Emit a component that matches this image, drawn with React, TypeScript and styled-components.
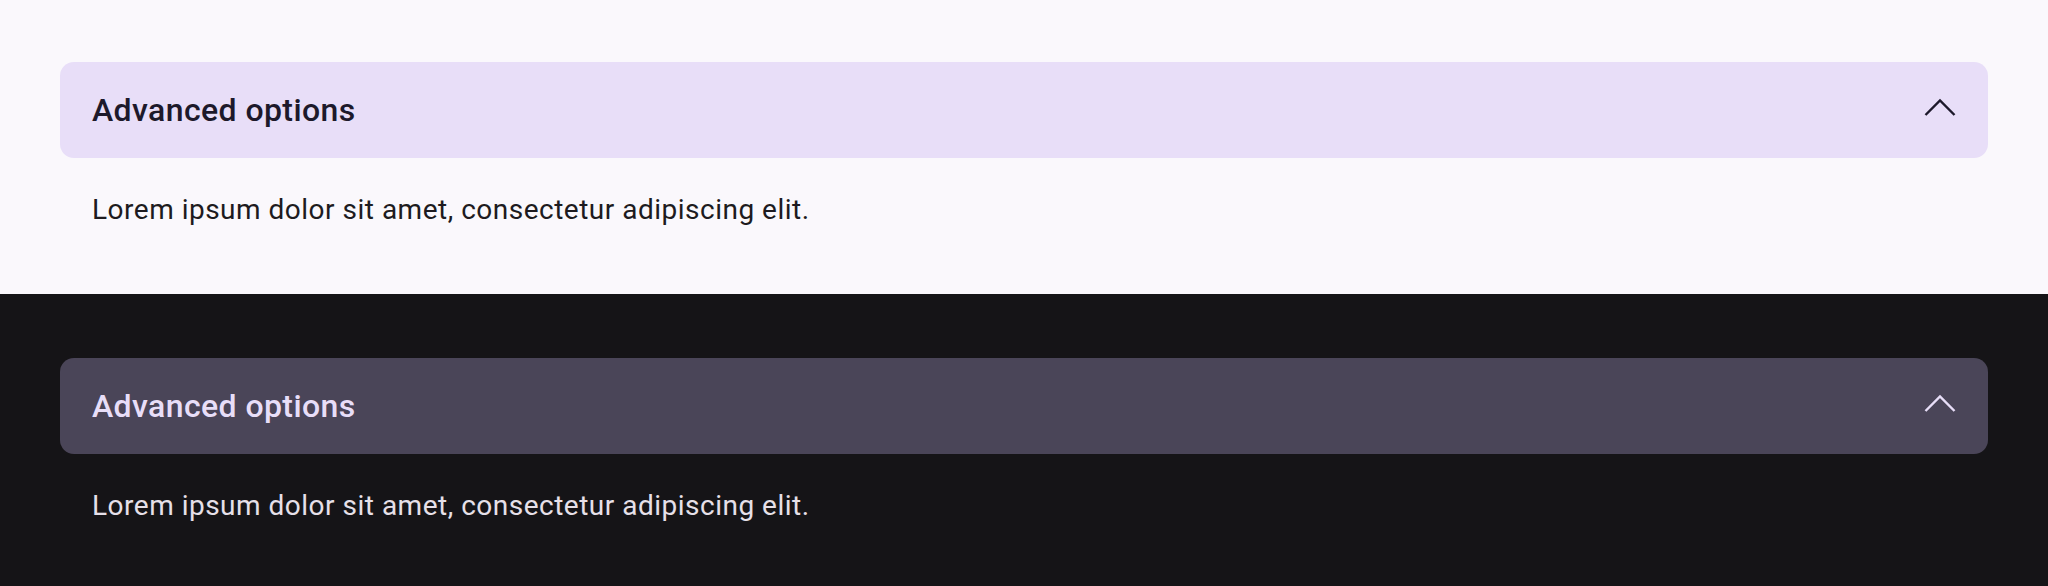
import React from 'react';
import styled, { createGlobalStyle } from 'styled-components';

const GlobalStyle = createGlobalStyle`
  html, body {
    margin: 0;
    padding: 0;
    background: #141316;
  }
  body {
    font-family: Roboto, "Noto Sans", Arial, sans-serif;
  }
`;

type Mode = 'light' | 'dark';

const palette = {
  light: {
    bg: '#faf8fc',
    header: '#e8def8',
    title: '#1d192b',
    text: '#1d1b20',
    icon: '#1d192b',
  },
  dark: {
    bg: '#151417',
    header: '#4a4558',
    title: '#e8def8',
    text: '#e6e0e9',
    icon: '#e8def8',
  },
};

const Panel = styled.section<{ $mode: Mode; $top: number; $height: number }>`
  box-sizing: border-box;
  height: ${(p) => p.$height}px;
  padding: ${(p) => p.$top}px 60px 0;
  background: ${(p) => palette[p.$mode].bg};
`;

const Summary = styled.button<{ $mode: Mode }>`
  box-sizing: border-box;
  display: flex;
  align-items: center;
  justify-content: space-between;
  width: 100%;
  height: 96px;
  padding: 0 32px;
  border: none;
  border-radius: 14px;
  background: ${(p) => palette[p.$mode].header};
  cursor: pointer;
  text-align: left;
`;

const Title = styled.span<{ $mode: Mode }>`
  font-family: Roboto, "Noto Sans", Arial, sans-serif;
  font-size: 32px;
  font-weight: 500;
  line-height: 40px;
  letter-spacing: 0.4px;
  color: ${(p) => palette[p.$mode].title};
`;

const Chevron = styled.svg`
  display: block;
  width: 32px;
  height: 32px;
  margin-top: -4px;
`;

const Details = styled.p<{ $mode: Mode }>`
  margin: 32px 0 0;
  padding: 0 32px;
  font-family: Roboto, "Noto Sans", Arial, sans-serif;
  font-size: 28px;
  line-height: 40px;
  letter-spacing: 0.5px;
  color: ${(p) => palette[p.$mode].text};
`;

type AccordionProps = {
  mode: Mode;
  top: number;
  height: number;
};

const Accordion: React.FC<AccordionProps> = ({ mode, top, height }) => (
  <Panel $mode={mode} $top={top} $height={height}>
    <Summary $mode={mode} aria-expanded>
      <Title $mode={mode}>Advanced options</Title>
      <Chevron viewBox="0 0 32 32" fill="none">
        <polyline
          points="1.5,23 16,8.5 30.5,23"
          stroke={palette[mode].icon}
          strokeWidth="2.4"
          strokeLinecap="butt"
        />
      </Chevron>
    </Summary>
    <Details $mode={mode}>Lorem ipsum dolor sit amet, consectetur adipiscing elit.</Details>
  </Panel>
);

const App: React.FC = () => (
  <>
    <GlobalStyle />
    <Accordion mode="light" top={62} height={294} />
    <Accordion mode="dark" top={64} height={292} />
  </>
);

export default App;
